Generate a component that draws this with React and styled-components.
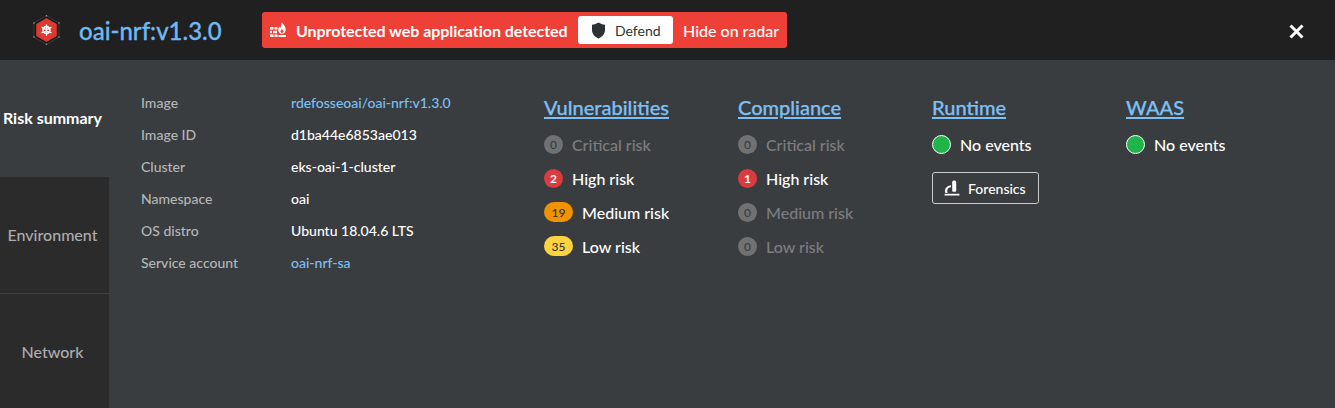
import React from 'react'
import styled, { createGlobalStyle } from 'styled-components'

const GlobalStyle = createGlobalStyle`
  html, body {
    margin: 0;
    padding: 0;
    background: #3a3d40;
  }
  * {
    box-sizing: border-box;
  }
`

const info = [
  { label: 'Image', value: 'rdefosseoai/oai-nrf:v1.3.0', link: true },
  { label: 'Image ID', value: 'd1ba44e6853ae013' },
  { label: 'Cluster', value: 'eks-oai-1-cluster' },
  { label: 'Namespace', value: 'oai' },
  { label: 'OS distro', value: 'Ubuntu 18.04.6 LTS' },
  { label: 'Service account', value: 'oai-nrf-sa', link: true },
]

const vulnerabilities = [
  { count: 0, label: 'Critical risk', level: 'none' },
  { count: 2, label: 'High risk', level: 'high' },
  { count: 19, label: 'Medium risk', level: 'medium' },
  { count: 35, label: 'Low risk', level: 'low' },
]

const compliance = [
  { count: 0, label: 'Critical risk', level: 'none' },
  { count: 1, label: 'High risk', level: 'high' },
  { count: 0, label: 'Medium risk', level: 'none' },
  { count: 0, label: 'Low risk', level: 'none' },
]

const badgeColors = {
  none: '#6f7173',
  high: '#d93b3f',
  medium: '#ef9400',
  low: '#ffd23f',
}

const badgeText = {
  none: '#3a3d40',
  high: '#ffffff',
  medium: '#2f3235',
  low: '#2f3235',
}

const hexDots = [[13.5, 0.8], [26, 8], [26, 22], [13.5, 29.2], [1, 22], [1, 8]]

function LogoIcon() {
  return (
    <svg width="27" height="30" viewBox="0 0 27 30">
      <polygon points="13.500,0.800 26,8 26,22 13.500,29.200 1,22 1,8" fill="#161616" stroke="#4d4f51" strokeWidth="0.7" />
      <polygon points="13.500,3 23.800,9 23.800,21 13.500,27 3.200,21 3.200,9" fill="#dc3a2f" />
      {hexDots.map(([x, y]) => <circle key={x + '-' + y} cx={x} cy={y} r="0.8" fill="#9c9c9c" />)}
      <g stroke="#ffffff" fill="none" strokeLinecap="round">
        <circle cx="13.500" cy="15" r="3.400" strokeWidth="1.600" />
        <path d="M13.500 9.800V20.200M9 12.400L18 17.600M9 17.600L18 12.400" strokeWidth="1.300" />
      </g>
    </svg>
  )
}

function FirewallIcon() {
  return (
    <svg width="16" height="16" viewBox="0 0 16 16" fill="#ffffff">
      <path d="M0 5h3.500v2.600H0zM4.500 5h3v2.600h-3zM0 8.700h2v2.600H0zM3 8.700h4v2.600H3zM0 12.400h3.500V15H0zM4.500 12.400h3V15h-3zM8.500 13h7.500v2H8.500z" />
      <path fillRule="evenodd" d="M12 0c.3 1.800 3.700 3.700 3.700 7.600 0 2.500-1.700 4.400-3.700 4.400S8.200 10.200 8.200 7.800c0-1.500.8-2.500 1.500-3.300.1.800.4 1.300.9 1.700C10.900 4 11.200 1.800 12 0zM12 7c-.6.900-1.500 1.500-1.500 2.500 0 .9.700 1.400 1.500 1.400s1.500-.5 1.500-1.400C13.500 8.500 12.600 7.900 12 7z" />
    </svg>
  )
}

function ShieldIcon() {
  return (
    <svg width="15" height="17" viewBox="0 0 15 17" fill="#2f3235">
      <path d="M7.500 0.500C9.500 1.800 11.500 2.500 14 2.800V8c0 4-2.800 6.900-6.500 8.500C3.800 14.900 1 12 1 8V2.800C3.500 2.500 5.500 1.800 7.500 0.500z" />
    </svg>
  )
}

function MicroscopeIcon() {
  return (
    <svg width="16" height="16" viewBox="0 0 16 16" fill="#ffffff">
      <path d="M8.200 2.200C8.200 1 9 .4 10.200 .4s2 .6 2 1.800v8.600a1 1 0 0 1-1 1H9.200a1 1 0 0 1-1-1z" />
      <path d="M7 5.200v1.900C4.800 7.500 3.200 9 3.200 10.900c0 .8.200 1.500.6 2.100H1.500C1.100 12.300 .9 11.600 .9 10.900.9 8 3.500 5.600 7 5.200z" />
      <path d="M0.600 13.800h14.800v1.700H.6z" />
    </svg>
  )
}

function CloseIcon() {
  return (
    <svg width="15" height="15" viewBox="0 0 15 15">
      <path d="M1.500 1.500L13.500 13.500M13.500 1.500L1.500 13.500" stroke="#ffffff" strokeWidth="3" />
    </svg>
  )
}

export default function App() {
  return (
    <Page>
      <GlobalStyle />
      <Header>
        <Logo><LogoIcon /></Logo>
        <Title>oai-nrf:v1.3.0</Title>
        <Banner>
          <FirewallIcon />
          <BannerText>Unprotected web application detected</BannerText>
          <DefendButton><ShieldIcon />Defend</DefendButton>
          <BannerLink>Hide on radar</BannerLink>
        </Banner>
        <CloseButton><CloseIcon /></CloseButton>
      </Header>
      <Body>
        <Sidebar>
          <Tab $active>Risk summary</Tab>
          <Tab>Environment</Tab>
          <Tab>Network</Tab>
        </Sidebar>
        <Content>
          <InfoList>
            {info.map(row => (
              <React.Fragment key={row.label}>
                <InfoLabel>{row.label}</InfoLabel>
                <InfoValue $link={row.link}>{row.value}</InfoValue>
              </React.Fragment>
            ))}
          </InfoList>
          <Columns>
            <Column>
              <ColumnTitle>Vulnerabilities</ColumnTitle>
              {vulnerabilities.map(item => <RiskRow key={item.label} {...item} />)}
            </Column>
            <Column>
              <ColumnTitle>Compliance</ColumnTitle>
              {compliance.map(item => <RiskRow key={item.label} {...item} />)}
            </Column>
            <Column>
              <ColumnTitle>Runtime</ColumnTitle>
              <Row>
                <StatusDot />
                <RowLabel>No events</RowLabel>
              </Row>
              <ForensicsButton><MicroscopeIcon />Forensics</ForensicsButton>
            </Column>
            <Column>
              <ColumnTitle>WAAS</ColumnTitle>
              <Row>
                <StatusDot />
                <RowLabel>No events</RowLabel>
              </Row>
            </Column>
          </Columns>
        </Content>
      </Body>
    </Page>
  )
}

function RiskRow({ count, label, level }) {
  const muted = level === 'none'
  return (
    <Row>
      <Badge $level={level} $wide={count > 9}>{count}</Badge>
      <RowLabel $muted={muted}>{label}</RowLabel>
    </Row>
  )
}

const Page = styled.div`
  width: 1335px;
  height: 408px;
  display: flex;
  flex-direction: column;
  overflow: hidden;
  font-family: Lato, "Open Sans", sans-serif;
  color: #ffffff;
`

const Header = styled.header`
  height: 60px;
  flex: none;
  display: flex;
  align-items: center;
  padding-left: 33px;
  background: #202020;
`

const Logo = styled.div`
  width: 27px;
  height: 30px;
  display: flex;
`

const Title = styled.h1`
  margin: 0 0 0 19px;
  width: 183px;
  font-size: 24px;
  font-weight: 500;
  color: #6fb8f0;
  white-space: nowrap;
  -webkit-text-stroke: 0.3px #6fb8f0;
`

const Banner = styled.div`
  width: 525px;
  height: 36px;
  display: flex;
  align-items: center;
  padding-left: 8px;
  border-radius: 3px;
  background: #ee4037;
`

const BannerText = styled.span`
  margin-left: 10px;
  width: 271px;
  font-size: 16px;
  font-weight: 700;
  letter-spacing: -0.05px;
  white-space: nowrap;
`

const DefendButton = styled.div`
  width: 95px;
  height: 28px;
  margin-left: 11px;
  display: flex;
  align-items: center;
  gap: 9px;
  padding-left: 13px;
  border-radius: 3px;
  background: #ffffff;
  color: #2f3235;
  font-size: 14px;
`

const BannerLink = styled.span`
  margin-left: 10px;
  font-size: 16px;
  font-weight: 500;
  white-space: nowrap;
`

const CloseButton = styled.div`
  margin-left: auto;
  margin-right: 31px;
  margin-top: 3px;
  display: flex;
`

const Body = styled.main`
  flex: 1;
  display: flex;
  background: #3a3d40;
`

const Sidebar = styled.nav`
  width: 109px;
  flex: none;
  display: grid;
  grid-template-rows: 117px 117px 114px;
`

const Tab = styled.div`
  display: flex;
  align-items: center;
  justify-content: center;
  padding-right: 4px;
  padding-bottom: 1px;
  font-size: 16px;
  white-space: nowrap;
  font-weight: ${p => (p.$active ? 700 : 500)};
  color: ${p => (p.$active ? '#ffffff' : '#adadad')};
  background: ${p => (p.$active ? 'transparent' : '#2b2b2b')};
  border-bottom: ${p => (p.$active ? '2px solid transparent' : '1px solid #3f4042')};
  &:last-child {
    padding-bottom: 0;
    border-bottom: none;
  }
`

const Content = styled.div`
  flex: 1;
  display: flex;
  padding: 26px 0 0 32px;
`

const InfoList = styled.dl`
  margin: 0;
  width: 403px;
  flex: none;
  display: grid;
  grid-template-columns: 150px 1fr;
  grid-auto-rows: 32px;
  align-items: center;
  align-content: start;
  font-size: 14px;
`

const InfoLabel = styled.dt`
  color: #b5b6b7;
  font-weight: 500;
`

const InfoValue = styled.dd`
  margin: 0;
  font-weight: 500;
  color: ${p => (p.$link ? '#7cc0f5' : '#ffffff')};
`

const Columns = styled.div`
  display: grid;
  grid-template-columns: repeat(4, 194px);
  margin-top: 1px;
`

const Column = styled.section`
  display: flex;
  flex-direction: column;
  align-items: flex-start;
`

const ColumnTitle = styled.h2`
  margin: 7px 0 6px;
  height: 27px;
  line-height: 27px;
  font-size: 20px;
  font-weight: 500;
  color: #7cc0f5;
  text-decoration: underline;
  text-underline-offset: 2px;
  -webkit-text-stroke: 0.25px #7cc0f5;
`

const Row = styled.div`
  height: 34px;
  display: flex;
  align-items: center;
  gap: 9px;
`

const Badge = styled.span`
  width: ${p => (p.$wide ? '29px' : '19px')};
  height: ${p => (p.$wide ? '20px' : '19px')};
  border-radius: 10px;
  display: flex;
  align-items: center;
  justify-content: center;
  font-size: 12px;
  font-weight: ${p => (p.$level === 'high' ? 700 : 500)};
  background: ${p => badgeColors[p.$level]};
  color: ${p => badgeText[p.$level]};
`

const RowLabel = styled.span`
  font-size: 16px;
  font-weight: 500;
  color: ${p => (p.$muted ? '#7c7d7f' : '#ffffff')};
  white-space: nowrap;
`

const StatusDot = styled.span`
  width: 19px;
  height: 19px;
  border-radius: 50%;
  background: #1fb54b;
  border: 1px solid #ffffff;
`

const ForensicsButton = styled.div`
  width: 107px;
  height: 32px;
  margin-top: 11px;
  display: flex;
  align-items: center;
  gap: 8px;
  padding-left: 11px;
  border: 1px solid #c9caca;
  border-radius: 3px;
  font-size: 14px;
  font-weight: 500;
`
